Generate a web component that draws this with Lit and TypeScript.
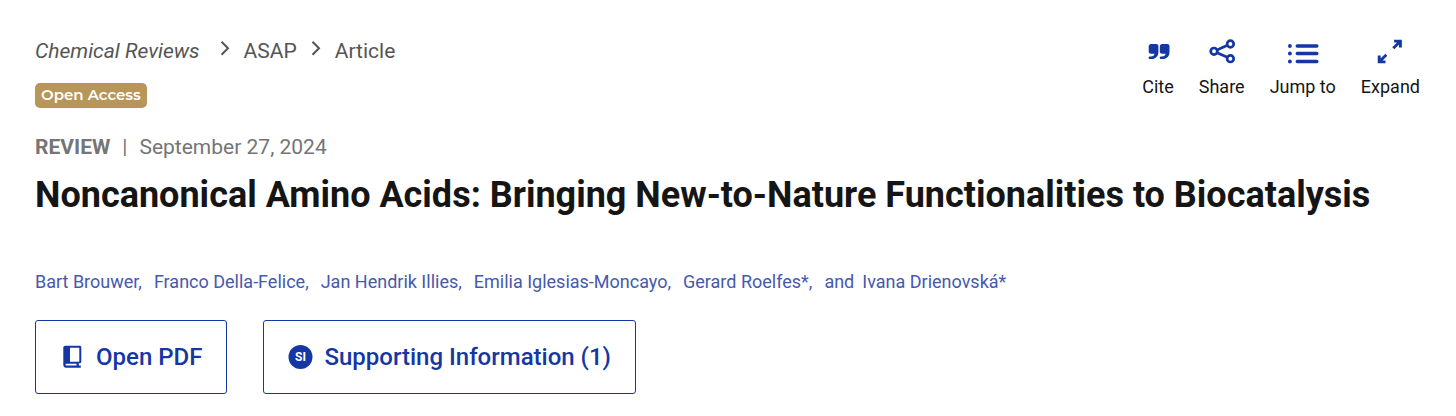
import { LitElement, html, css, svg } from "lit";
import { customElement } from "lit/decorators.js";

const citeIcon = svg`<path fill="currentColor" d="M8 5h5.200c1.200 0 2.200.9 2.200 2.200v5.500c0 4.700-2.900 7.400-7.700 7.400H7c-1.800 0-1.800-2.700 0-2.700h.9c2.100 0 3.300-1 3.600-2.700H8c-1.300 0-2.300-1-2.300-2.300V7.300C5.700 6 6.700 5 8 5zM19.100 5h5.200c1.200 0 2.200.9 2.200 2.200v5.500c0 4.700-2.900 7.400-7.700 7.400h-.7c-1.800 0-1.800-2.700 0-2.700h.9c2.100 0 3.300-1 3.600-2.700h-3.500c-1.300 0-2.300-1-2.300-2.300V7.300c0-1.300 1-2.300 2.300-2.300z"/>`;

const shareIcon = svg`<g fill="none" stroke="currentColor" stroke-width="2.700"><circle cx="7" cy="12.300" r="3.300"/><circle cx="23.400" cy="5" r="3.300"/><circle cx="23.400" cy="19.700" r="3.300"/><path d="M10 10.900 20.400 6.300M10 13.700 20.400 18.300"/></g>`;

const listIcon = svg`<g fill="currentColor"><circle cx="1.900" cy="7" r="1.900"/><circle cx="1.900" cy="14.500" r="1.900"/><circle cx="1.900" cy="22.500" r="1.900"/></g><path fill="none" stroke="currentColor" stroke-width="3.500" stroke-linecap="round" d="M9.300 7h19.500M9.300 14.500h19.500M9.300 22.500h19.500"/>`;

const expandIcon = svg`<g fill="none" stroke="currentColor" stroke-width="2.900"><path d="M19.100 2.100h6.300v6.300M25 2.500l-6.700 6.700M4.200 16.600v6.300h6.300M4.600 22.500l6.700-6.700"/></g>`;

const tools = [
  { label: "Cite", icon: citeIcon },
  { label: "Share", icon: shareIcon },
  { label: "Jump to", icon: listIcon },
  { label: "Expand", icon: expandIcon },
];

const authors = [
  "Bart Brouwer",
  "Franco Della-Felice",
  "Jan Hendrik Illies",
  "Emilia Iglesias-Moncayo",
  "Gerard Roelfes*",
];

@customElement("app-root")
export class AppRoot extends LitElement {
  static styles = css`
    :host {
      display: block;
      padding: 35px 36px 22px 35px;
      background: #fff;
      color: #151515;
      font-family: Roboto, "Liberation Sans", sans-serif;
    }
    a {
      color: inherit;
      text-decoration: none;
    }
    button {
      font: inherit;
      cursor: pointer;
      background: none;
    }
    .top {
      display: flex;
      justify-content: space-between;
      align-items: flex-start;
      gap: 24px;
    }
    .crumbs {
      display: flex;
      align-items: center;
      flex-wrap: wrap;
      gap: 14px;
      font-size: 21px;
      line-height: 32px;
      color: #555;
    }
    .journal {
      padding-right: 6px;
      font-style: italic;
    }
    .chevron {
      display: block;
      width: 10px;
      height: 20px;
    }
    .badge {
      display: block;
      width: fit-content;
      margin-top: 16px;
      padding: 0 6px 1px;
      border-radius: 5px;
      background: #b89659;
      color: #fff;
      font: 600 15px/24px Montserrat, Lato, sans-serif;
    }
    .tools {
      display: flex;
      gap: 25px;
      padding-top: 4px;
    }
    .tool {
      display: flex;
      flex-direction: column;
      align-items: center;
      gap: 10px;
      padding: 0;
      border: 0;
      color: #151515;
      font-size: 18px;
      line-height: 24px;
    }
    .tool-icon {
      width: 30px;
      height: 26px;
      overflow: visible;
      color: #1537a3;
    }
    .meta {
      display: flex;
      gap: 12px;
      margin-top: 23px;
      font-size: 21px;
      line-height: 32px;
      color: #757575;
    }
    .kind {
      font-weight: 700;
    }
    .title {
      margin: 8px 0 0;
      font-size: 36px;
      line-height: 48px;
      font-weight: 700;
    }
    .authors {
      display: flex;
      flex-wrap: wrap;
      column-gap: 12px;
      margin-top: 51px;
      font-size: 18px;
      line-height: 24px;
      color: #4559ae;
    }
    .last {
      display: flex;
      gap: 8px;
    }
    .actions {
      display: flex;
      flex-wrap: wrap;
      gap: 36px;
      margin-top: 26px;
    }
    .action {
      display: flex;
      align-items: center;
      gap: 11px;
      padding: 20px 24px;
      border: 1px solid #1537a3;
      border-radius: 3px;
      color: #1537a3;
      font-size: 24px;
      line-height: 32px;
      font-weight: 500;
    }
    .action-icon {
      width: 25px;
      height: 25px;
    }
    .si {
      font-size: 12px;
      font-weight: 700;
    }
  `;

  private chevron() {
    return html`<svg class="chevron" viewBox="0 0 10 20" aria-hidden="true">
      <path d="M1.500 .7 8 7.200 1.500 13.700" fill="none" stroke="currentColor" stroke-width="2" />
    </svg>`;
  }

  render() {
    return html`
      <header class="top">
        <div>
          <nav class="crumbs" aria-label="Breadcrumb">
            <a class="journal" href="#journal">Chemical Reviews</a>
            ${this.chevron()}
            <a href="#asap">ASAP</a>
            ${this.chevron()}
            <span>Article</span>
          </nav>
          <span class="badge">Open Access</span>
        </div>
        <div class="tools">
          ${tools.map(
            (t) => html`<button class="tool" type="button">
              <svg class="tool-icon" viewBox="0 0 30 26" aria-hidden="true">${t.icon}</svg>
              <span>${t.label}</span>
            </button>`
          )}
        </div>
      </header>
      <main>
        <div class="meta">
          <span class="kind">REVIEW</span>
          <span>|</span>
          <time datetime="2024-09-27">September 27, 2024</time>
        </div>
        <h1 class="title">Noncanonical Amino Acids: Bringing New-to-Nature Functionalities to Biocatalysis</h1>
        <div class="authors">
          ${authors.map((a) => html`<span><a href="#authors">${a}</a>,</span>`)}
          <span class="last"><span>and</span><a href="#authors">Ivana Drienovská*</a></span>
        </div>
        <div class="actions">
          <button class="action" type="button">
            <svg class="action-icon" viewBox="0 0 25 25" aria-hidden="true">
              <path fill="currentColor" fill-rule="evenodd" d="M5.300 .7h14.400c.9 0 1.600.7 1.600 1.600v14.400c0 .8-.5 1.400-1.300 1.500h-1.200v2.400h2v2.200H6.300c-1.900 0-3-1.200-3-3V2.700c0-1.200.8-2 2-2zM10 2.700v14h9.300v-14zM6.500 18.700c-1.300 0-1.300 1.900 0 1.900h10v-1.900z" />
            </svg>
            <span>Open PDF</span>
          </button>
          <button class="action" type="button">
            <svg class="action-icon" viewBox="0 0 25 25" aria-hidden="true">
              <circle cx="12.500" cy="12" r="12" fill="currentColor" />
              <text class="si" x="12.500" y="16" text-anchor="middle" fill="#fff">SI</text>
            </svg>
            <span>Supporting Information (1)</span>
          </button>
        </div>
      </main>
    `;
  }
}
